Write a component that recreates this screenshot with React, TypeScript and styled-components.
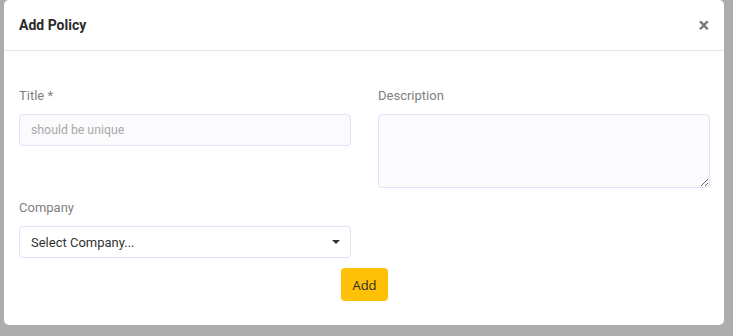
import styled, { createGlobalStyle } from 'styled-components';

const GlobalStyle = createGlobalStyle`
    html, body {
        margin: 0;
        padding: 0;
        background: #adadad;
        font-family: Roboto, "Liberation Sans", sans-serif;
        overflow: hidden;
    }
`;

const Backdrop = styled.div`
    width: 733px;
    height: 336px;
    padding-left: 4px;
    box-sizing: border-box;
    background: #adadad;
`;

const Modal = styled.div`
    width: 720px;
    height: 325px;
    background: #fff;
    border-radius: 5px;
    display: flex;
    flex-direction: column;
`;

const Header = styled.div`
    height: 50px;
    display: flex;
    align-items: center;
    justify-content: space-between;
    padding: 0 15px;
    border-bottom: 1px solid #e6e6e6;
`;

const Title = styled.h5`
    margin: 0;
    font-size: 14px;
    font-weight: 700;
    color: #2b2b2b;
`;

const Close = styled.span`
    font-size: 20px;
    font-weight: 700;
    color: #777;
    line-height: 1;
    margin-top: -1px;
    cursor: pointer;
`;

const Body = styled.div`
    padding: 36px 14px 0 15px;
    display: flex;
    flex-direction: column;
`;

const Row = styled.div<{ $gapBelow?: number }>`
    display: grid;
    grid-template-columns: 332px 332px;
    column-gap: 27px;
    margin-bottom: ${(p) => p.$gapBelow ?? 0}px;
`;

const Field = styled.div`
    display: flex;
    flex-direction: column;
`;

const Label = styled.label`
    font-size: 13px;
    line-height: 18px;
    color: #808080;
    margin-bottom: 9px;
`;

const Input = styled.input`
    height: 32px;
    box-sizing: border-box;
    border: 1px solid #e1e1fa;
    border-radius: 4px;
    background: #fbfbfe;
    padding: 0 11px;
    font-family: Roboto, "Liberation Sans", sans-serif;
    font-size: 12.3px;
    color: #333;
    &::placeholder {
        color: #a8a8a8;
    }
`;

const TextArea = styled.textarea`
    height: 74px;
    box-sizing: border-box;
    border: 1px solid #e1e1fa;
    border-radius: 4px;
    background: #fbfbfe;
    padding: 6px 11px;
    resize: vertical;
    font-family: Roboto, "Liberation Sans", sans-serif;
`;

const Select = styled.div`
    height: 32px;
    box-sizing: border-box;
    border: 1px solid #e1e1fa;
    border-radius: 4px;
    background: #fff;
    padding: 0 10px 0 11px;
    display: flex;
    align-items: center;
    justify-content: space-between;
    font-size: 13px;
    color: #333;
`;

const Caret = styled.span`
    width: 0;
    height: 0;
    border-left: 4px solid transparent;
    border-right: 4px solid transparent;
    border-top: 4px solid #333;
`;

const Actions = styled.div`
    display: flex;
    justify-content: center;
    margin-top: 10px;
`;

const Button = styled.button`
    height: 33px;
    width: 47px;
    padding: 0;
    border: none;
    border-radius: 4px;
    background: #ffc107;
    color: #2b2b2b;
    font-family: "Open Sans", "Liberation Sans", sans-serif;
    font-size: 13px;
    cursor: pointer;
`;

const App = () => {
    return (
        <>
            <GlobalStyle />
            <Backdrop>
                <Modal>
                    <Header>
                        <Title>Add Policy</Title>
                        <Close>×</Close>
                    </Header>
                    <Body>
                        <Row $gapBelow={11}>
                            <Field>
                                <Label>Title *</Label>
                                <Input placeholder="should be unique" />
                            </Field>
                            <Field>
                                <Label>Description</Label>
                                <TextArea />
                            </Field>
                        </Row>
                        <Row>
                            <Field>
                                <Label>Company</Label>
                                <Select>
                                    <span>Select Company...</span>
                                    <Caret />
                                </Select>
                            </Field>
                        </Row>
                        <Actions>
                            <Button>Add</Button>
                        </Actions>
                    </Body>
                </Modal>
            </Backdrop>
        </>
    );
};

export default App;
